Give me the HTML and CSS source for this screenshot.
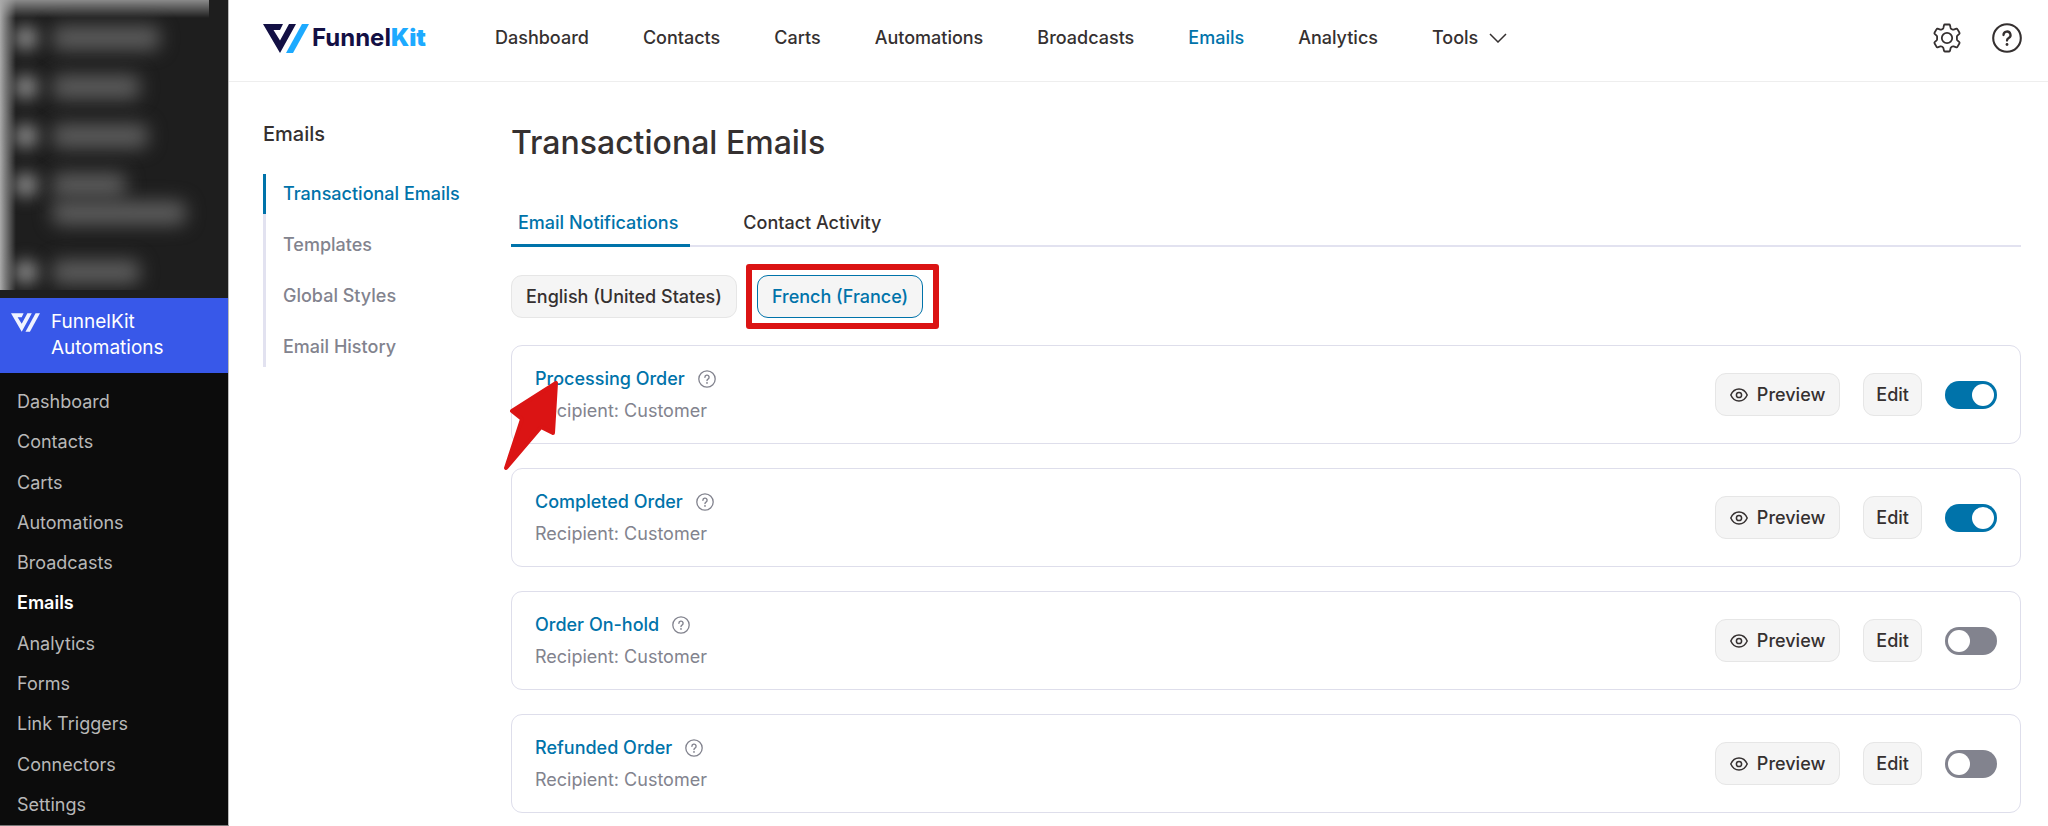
FILE: index.html
```html
<!DOCTYPE html>
<html lang="en">
<head>
<meta charset="utf-8">
<title>Transactional Emails – FunnelKit Automations</title>
<link rel="stylesheet" href="styles.css">
</head>
<body>
<svg class="defs" width="0" height="0" aria-hidden="true">
  <symbol id="help" viewBox="0 0 18 18"><circle cx="9" cy="9" r="8.2" fill="none" stroke="currentColor" stroke-width="1.3"/><path d="M6.9 7.2a2.1 2.1 0 1 1 3.1 1.9c-.7.4-1 .8-1 1.5" fill="none" stroke="currentColor" stroke-width="1.4" stroke-linecap="round"/><circle cx="9" cy="12.9" r=".9" fill="currentColor"/></symbol>
  <symbol id="eye" viewBox="0 0 18 14"><path d="M.8 7C2.4 3.4 5.4 1 9 1s6.600 2.400 8.200 6c-1.600 3.600-4.600 6-8.200 6S2.400 10.600.8 7Z" fill="none" stroke="currentColor" stroke-width="1.500"/><circle cx="9" cy="7" r="2.600" fill="none" stroke="currentColor" stroke-width="1.500"/></symbol>
  <symbol id="mark" viewBox="0 0 46 29"><path d="M0 0H20L17 6H10.500L17 16.500L26 0H33L17 29Z" fill="var(--mark-a)"/><path d="M39 0H46L30 29H23Z" fill="var(--mark-b)"/></symbol>
</svg>
<div class="app">
  <aside class="sidebar">
    <div class="hidden-menu" aria-hidden="true">
      <i class="dot"></i><i class="bar w-100"></i>
      <i class="dot"></i><i class="bar w-80"></i>
      <i class="dot"></i><i class="bar w-90"></i>
      <i class="dot"></i><span class="bars"><i class="bar w-70"></i><i class="bar w-130"></i></span>
      <i class="dot last"></i><i class="bar w-80 last"></i>
    </div>
    <a class="plugin" href="#"><svg class="plugin-mark"><use href="#mark"/></svg><span>FunnelKit<br>Automations</span></a>
    <nav class="submenu">
      <a href="#">Dashboard</a>
      <a href="#">Contacts</a>
      <a href="#">Carts</a>
      <a href="#">Automations</a>
      <a href="#">Broadcasts</a>
      <a href="#" class="current">Emails</a>
      <a href="#">Analytics</a>
      <a href="#">Forms</a>
      <a href="#">Link Triggers</a>
      <a href="#">Connectors</a>
      <a href="#">Settings</a>
    </nav>
  </aside>
  <div class="page">
    <header class="topbar">
      <a class="logo" href="#"><svg class="logo-mark"><use href="#mark"/></svg><span class="logo-text">Funnel<b>Kit</b></span></a>
      <nav class="topnav">
        <a href="#">Dashboard</a>
        <a href="#">Contacts</a>
        <a href="#">Carts</a>
        <a href="#">Automations</a>
        <a href="#">Broadcasts</a>
        <a href="#" class="current">Emails</a>
        <a href="#">Analytics</a>
        <a href="#" class="more">Tools <svg class="chevron" viewBox="0 0 18 10"><path d="M1 1L9 9L17 1" fill="none" stroke="currentColor" stroke-width="1.500"/></svg></a>
      </nav>
      <div class="tools">
        <button type="button" aria-label="Settings"><svg viewBox="0 0 30 30"><path d="M12.800 1.500h4.400q.6 0 .8.700l.6 2.700q.2.700.8 1l1 .6q.6.300 1.200.1l2.800-.9q.7-.2 1 .4l2.100 3.700q.3.600-.2 1.100l-1.900 1.800q-.5.500-.5 1.100v2.400q0 .6.500 1.100l1.900 1.800q.5.500.2 1.100l-2.100 3.700q-.3.600-1 .4l-2.800-.9q-.6-.2-1.200.1l-1 .6q-.6.300-.8 1l-.6 2.700q-.2.700-.8.700h-4.400q-.6 0-.8-.7l-.6-2.700q-.2-.7-.8-1l-1-.6q-.6-.3-1.200-.1l-2.800.9q-.7.200-1-.4l-2.100-3.700q-.3-.6.2-1.100l1.900-1.800q.5-.5.500-1.100v-2.400q0-.6-.5-1.100l-1.900-1.800q-.5-.5-.2-1.100l2.100-3.700q.3-.6 1-.4l2.800.9q.6.200 1.200-.1l1-.6q.6-.3.800-1l.6-2.700q.2-.7.8-.7Z" fill="none" stroke="currentColor" stroke-width="1.800" stroke-linejoin="round"/><circle cx="15" cy="15" r="5.200" fill="none" stroke="currentColor" stroke-width="1.800"/></svg></button>
        <button type="button" aria-label="Help"><svg viewBox="0 0 30 30"><circle cx="15" cy="15" r="13.800" fill="none" stroke="currentColor" stroke-width="2.100"/><path d="M11.500 12a3.500 3.500 0 1 1 5.200 3.100c-1.200.7-1.700 1.300-1.700 2.500" fill="none" stroke="currentColor" stroke-width="2.300" stroke-linecap="round"/><circle cx="15" cy="21.500" r="1.400" fill="currentColor"/></svg></button>
      </div>
    </header>
    <div class="content">
      <aside class="section-nav">
        <h2>Emails</h2>
        <nav>
          <a href="#" class="current">Transactional Emails</a>
          <a href="#">Templates</a>
          <a href="#">Global Styles</a>
          <a href="#">Email History</a>
        </nav>
      </aside>
      <main class="main">
        <h1>Transactional Emails</h1>
        <nav class="tabs">
          <a href="#" class="current">Email Notifications</a>
          <a href="#">Contact Activity</a>
        </nav>
        <div class="languages">
          <button type="button" class="btn language">English (United States)</button>
          <div class="highlighted"><button type="button" class="btn language selected">French (France)</button></div>
        </div>
        <div class="cards">
          <section class="card">
            <div class="info"><h3><a href="#">Processing Order</a><svg class="help"><use href="#help"/></svg></h3><p>Recipient: Customer</p></div>
            <button type="button" class="btn preview"><svg class="eye"><use href="#eye"/></svg>Preview</button>
            <button type="button" class="btn">Edit</button>
            <input type="checkbox" class="switch" aria-label="Enable Processing Order" checked>
            <svg class="arrow" viewBox="0 0 56 90"><path d="M53 2L50 52L38 46L3 87L19 38L9 30Z" fill="currentColor" stroke="currentColor" stroke-width="4" stroke-linejoin="round"/></svg>
          </section>
          <section class="card">
            <div class="info"><h3><a href="#">Completed Order</a><svg class="help"><use href="#help"/></svg></h3><p>Recipient: Customer</p></div>
            <button type="button" class="btn preview"><svg class="eye"><use href="#eye"/></svg>Preview</button>
            <button type="button" class="btn">Edit</button>
            <input type="checkbox" class="switch" aria-label="Enable Completed Order" checked>
          </section>
          <section class="card">
            <div class="info"><h3><a href="#">Order On-hold</a><svg class="help"><use href="#help"/></svg></h3><p>Recipient: Customer</p></div>
            <button type="button" class="btn preview"><svg class="eye"><use href="#eye"/></svg>Preview</button>
            <button type="button" class="btn">Edit</button>
            <input type="checkbox" class="switch" aria-label="Enable Order On-hold">
          </section>
          <section class="card">
            <div class="info"><h3><a href="#">Refunded Order</a><svg class="help"><use href="#help"/></svg></h3><p>Recipient: Customer</p></div>
            <button type="button" class="btn preview"><svg class="eye"><use href="#eye"/></svg>Preview</button>
            <button type="button" class="btn">Edit</button>
            <input type="checkbox" class="switch" aria-label="Enable Refunded Order">
          </section>
        </div>
      </main>
    </div>
  </div>
</div>
</body>
</html>
```
FILE: styles.css
```css
* { box-sizing: border-box; }
body { margin: 0; font: 500 18px/24px Inter, "Liberation Sans", sans-serif; color: #353030; background: #fff; }
a { color: inherit; text-decoration: none; }
h1, h2, h3, p { margin: 0; font-weight: 500; }
button { font: inherit; color: inherit; cursor: pointer; }
.defs { position: absolute; }
.app { display: flex; min-height: 100vh; }

.sidebar { flex: none; width: 229px; display: flex; flex-direction: column; background: #1e1e1e; border-right: 1px solid #bbb; border-bottom: 1px solid #777; }
.hidden-menu { height: 290px; margin: 0 19px 8px 0; padding: 26px 0 0 14px; overflow: hidden; display: grid; grid-template-columns: 24px 1fr; column-gap: 14px; align-content: start; row-gap: 25px; background: linear-gradient(to right, #aaa, #1e1e1e00 16px), linear-gradient(#8a8a8a, #1e1e1e00 18px); }
.dot { width: 24px; height: 24px; border-radius: 50%; background: #888; filter: blur(8px); }
.bar { height: 24px; border-radius: 8px; background: #5c5c5c; filter: blur(9px); }
.bars { display: grid; row-gap: 4px; }
.last { margin-top: 10px; }
.w-70 { width: 74px; }
.w-80 { width: 88px; }
.w-90 { width: 96px; }
.w-100 { width: 108px; }
.w-130 { width: 134px; }
.plugin { display: flex; gap: 11px; padding: 11px 11px 12px; background: #3858e9; color: #fff; font-size: 19px; font-weight: 400; line-height: 26px; }
.plugin-mark { --mark-a: #f0f3ff; --mark-b: #f0f3ff; width: 29px; height: 19px; margin-top: 4px; }
.submenu { flex: 1; display: flex; flex-direction: column; padding: 9px 17px 0; background: #0c0c0c; color: #b8b8b8; font-weight: 400; }
.submenu a { flex: 1; display: flex; align-items: center; }
.submenu .current { color: #fff; font-weight: 600; }

.page { flex: 1; min-width: 0; }
.topbar { display: flex; align-items: center; height: 82px; padding: 0 26px 5px 34px; border-bottom: 1px solid #eee; }
.logo { display: flex; align-items: center; gap: 3px; width: 232px; }
.logo-mark { --mark-a: #131044; --mark-b: #1daaff; width: 46px; height: 29px; }
.logo-text { font-size: 24px; font-weight: 700; color: #131044; }
.logo-text b { color: #1daaff; }
.topnav { display: flex; gap: 54px; }
.topnav .current { color: #0073aa; }
.more { display: flex; align-items: center; gap: 11px; }
.chevron { width: 18px; height: 10px; }
.tools { display: flex; gap: 30px; margin-left: auto; }
.tools button { width: 30px; height: 30px; padding: 0; border: 0; background: none; }
.tools svg { display: block; width: 30px; height: 30px; }

.content { display: flex; gap: 36px; padding: 40px 27px 0 34px; }
.section-nav { flex: none; width: 212px; }
.section-nav h2 { font-size: 20px; line-height: 24px; }
.section-nav nav { display: flex; flex-direction: column; gap: 11px; margin-top: 28px; box-shadow: inset 3px 0 #e2e2f0; color: #82838e; }
.section-nav nav a { height: 40px; padding: 8px 0 8px 17px; border-left: 3px solid transparent; white-space: nowrap; }
.section-nav nav .current { color: #0073aa; border-color: #0073aa; }

.main { flex: 1; min-width: 0; }
h1 { font-size: 32px; line-height: 42px; }
.tabs { display: flex; gap: 46px; margin-top: 40px; box-shadow: inset 0 -2px #e2e2f0; }
.tabs a { padding: 7px 12px 9px 7px; border-bottom: 3px solid transparent; }
.tabs .current { color: #0073aa; border-color: #0073aa; }
.languages { display: flex; align-items: center; gap: 9px; margin-top: 17px; }
.highlighted { padding: 5px 10px 5px 5px; border: 6px solid #db1414; border-radius: 3px; }
.btn { display: flex; align-items: center; gap: 9px; height: 43px; padding: 0 12px; border: 1px solid #e6e6e6; border-radius: 11px; background: #f5f5f5; }
.btn.language { padding: 0 14px; }
.btn.preview { padding: 0 14px; }
.btn.selected { color: #0073aa; border-color: #0073aa; }
.cards { display: grid; gap: 24px; margin-top: 16px; }
.card { position: relative; display: flex; align-items: center; gap: 23px; height: 99px; padding: 0 23px; border: 1px solid #dedeeb; border-radius: 11px; }
.info { flex: 1; }
.info h3 { display: flex; align-items: center; gap: 13px; font-size: 18px; color: #0073aa; }
.info p { margin-top: 8px; font-weight: 400; color: #82838e; }
.help { width: 18px; height: 18px; color: #82838e; }
.eye { width: 18px; height: 14px; }
.switch { appearance: none; width: 52px; height: 28px; margin: 0; padding: 3px; border-radius: 14px; background: #82838e; display: flex; }
.switch::before { content: ""; width: 22px; height: 22px; border-radius: 50%; background: #fff; }
.switch:checked { background: #0073aa; justify-content: flex-end; }
.arrow { position: absolute; left: -9px; top: 35px; width: 56px; height: 90px; color: #db1414; z-index: 1; }
```
